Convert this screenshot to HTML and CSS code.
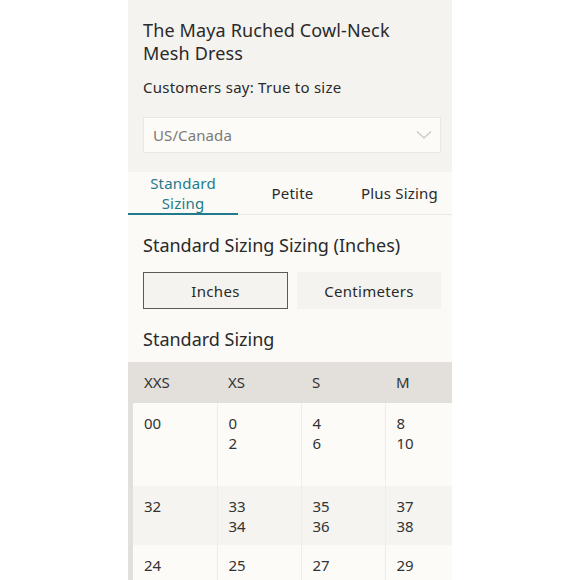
FILE: index.html
```html
<!DOCTYPE html>
<html>
<head>
<meta charset="utf-8">
<link rel="stylesheet" href="styles.css">
</head>
<body>
<div class="panel">
  <div class="top">
    <h1 class="title">The Maya Ruched Cowl-Neck Mesh Dress</h1>
    <p class="say">Customers say: True to size</p>
    <div class="select">
      <span>US/Canada</span>
      <svg class="chev" width="16" height="10" viewBox="0 0 16 10"><path d="M1 1.5 L8 8 L15 1.5" fill="none" stroke="#c9c6c0" stroke-width="1.2"/></svg>
    </div>
  </div>
  <div class="tabs">
    <div class="tab active">Standard<br>Sizing</div>
    <div class="tab">Petite</div>
    <div class="tab">Plus Sizing</div>
  </div>
  <div class="section">
    <h2 class="heading">Standard Sizing Sizing (Inches)</h2>
    <div class="units">
      <div class="unit selected">Inches</div>
      <div class="unit">Centimeters</div>
    </div>
    <h2 class="heading sub">Standard Sizing</h2>
  </div>
  <div class="table-wrap">
    <table class="sizes">
      <thead>
        <tr><th>XXS</th><th>XS</th><th>S</th><th class="last">M</th></tr>
      </thead>
      <tbody>
        <tr class="r1"><td>00<br>&nbsp;<br>&nbsp;</td><td>0<br>2</td><td>4<br>6</td><td class="last">8<br>10</td></tr>
        <tr class="r2"><td>32</td><td>33<br>34</td><td>35<br>36</td><td class="last">37<br>38</td></tr>
        <tr class="r3"><td>24</td><td>25</td><td>27</td><td class="last">29</td></tr>
      </tbody>
    </table>
  </div>
</div>
</body>
</html>
```

FILE: styles.css
```css
html, body {
  margin: 0;
  padding: 0;
  background: #ffffff;
}
body {
  font-family: "Noto Sans", "Lato", sans-serif;
  color: #2a2a2a;
}
.panel {
  width: 324px;
  height: 580px;
  margin-left: 128px;
  background: #fbfaf6;
  overflow: hidden;
}
.top {
  background: #f4f3ef;
  padding: 19px 11px 19px 15px;
}
.title {
  margin: 0;
  font-size: 18px;
  font-weight: 400;
  line-height: 23px;
  letter-spacing: 0.15px;
}
.say {
  margin: 12px 0 0;
  font-size: 15px;
  line-height: 20px;
  letter-spacing: 0.25px;
}
.select {
  margin-top: 20px;
  height: 34px;
  border: 1px solid #e9e7e2;
  background: #fcfbf8;
  display: flex;
  align-items: center;
  justify-content: space-between;
  padding: 0 8px 0 9px;
  font-size: 15px;
  color: #7c7a77;
  letter-spacing: 0.1px;
}
.chev {
  display: block;
}
.tabs {
  display: grid;
  grid-template-columns: 110px 109px 105px;
  height: 42px;
  border-bottom: 1px solid #ebe9e4;
}
.tab {
  display: flex;
  align-items: center;
  justify-content: center;
  text-align: center;
  font-size: 15px;
  line-height: 20px;
  letter-spacing: 0.2px;
  color: #2a2a2a;
}
.tab.active {
  color: #1f7a8c;
  border-bottom: 2px solid #1f7a8c;
  margin-bottom: -1px;
  padding-top: 1px;
}
.section {
  padding: 0 11px 0 15px;
}
.heading {
  margin: 18px 0 0;
  font-size: 18px;
  font-weight: 400;
  line-height: 24px;
  letter-spacing: 0;
}
.units {
  margin-top: 15px;
  display: grid;
  grid-template-columns: 145px 144px;
  gap: 9px;
  height: 37px;
}
.unit {
  background: #f4f3ef;
  display: flex;
  align-items: center;
  justify-content: center;
  font-size: 15px;
  letter-spacing: 0.3px;
}
.unit.selected {
  border: 1px solid #5a5a5a;
}
.heading.sub {
  margin-top: 18px;
}
.table-wrap {
  margin-top: 11px;
  overflow: hidden;
  border-left: 5px solid #e3e0db;
}
.sizes {
  border-collapse: collapse;
  table-layout: fixed;
  width: 319px;
  font-size: 15px;
  color: #333;
}
.sizes th, .sizes td {
  width: 84px;
  box-sizing: border-box;
  text-align: left;
  vertical-align: top;
  font-weight: 400;
  line-height: 20px;
  padding: 10px 11px 11px;
  border-right: 1px solid #efede8;
}
.sizes .last {
  width: 67px;
  border-right: none;
}
.sizes th {
  background: #e3e0db;
  border-right: none;
  height: 40px;
}
.r1 { background: #fcfbf8; }
.r2 { background: #f5f4f0; }
.r3 { background: #fcfbf8; }
.r1 td { padding-bottom: 13px; }
.r2 td { padding-bottom: 9px; }
```
